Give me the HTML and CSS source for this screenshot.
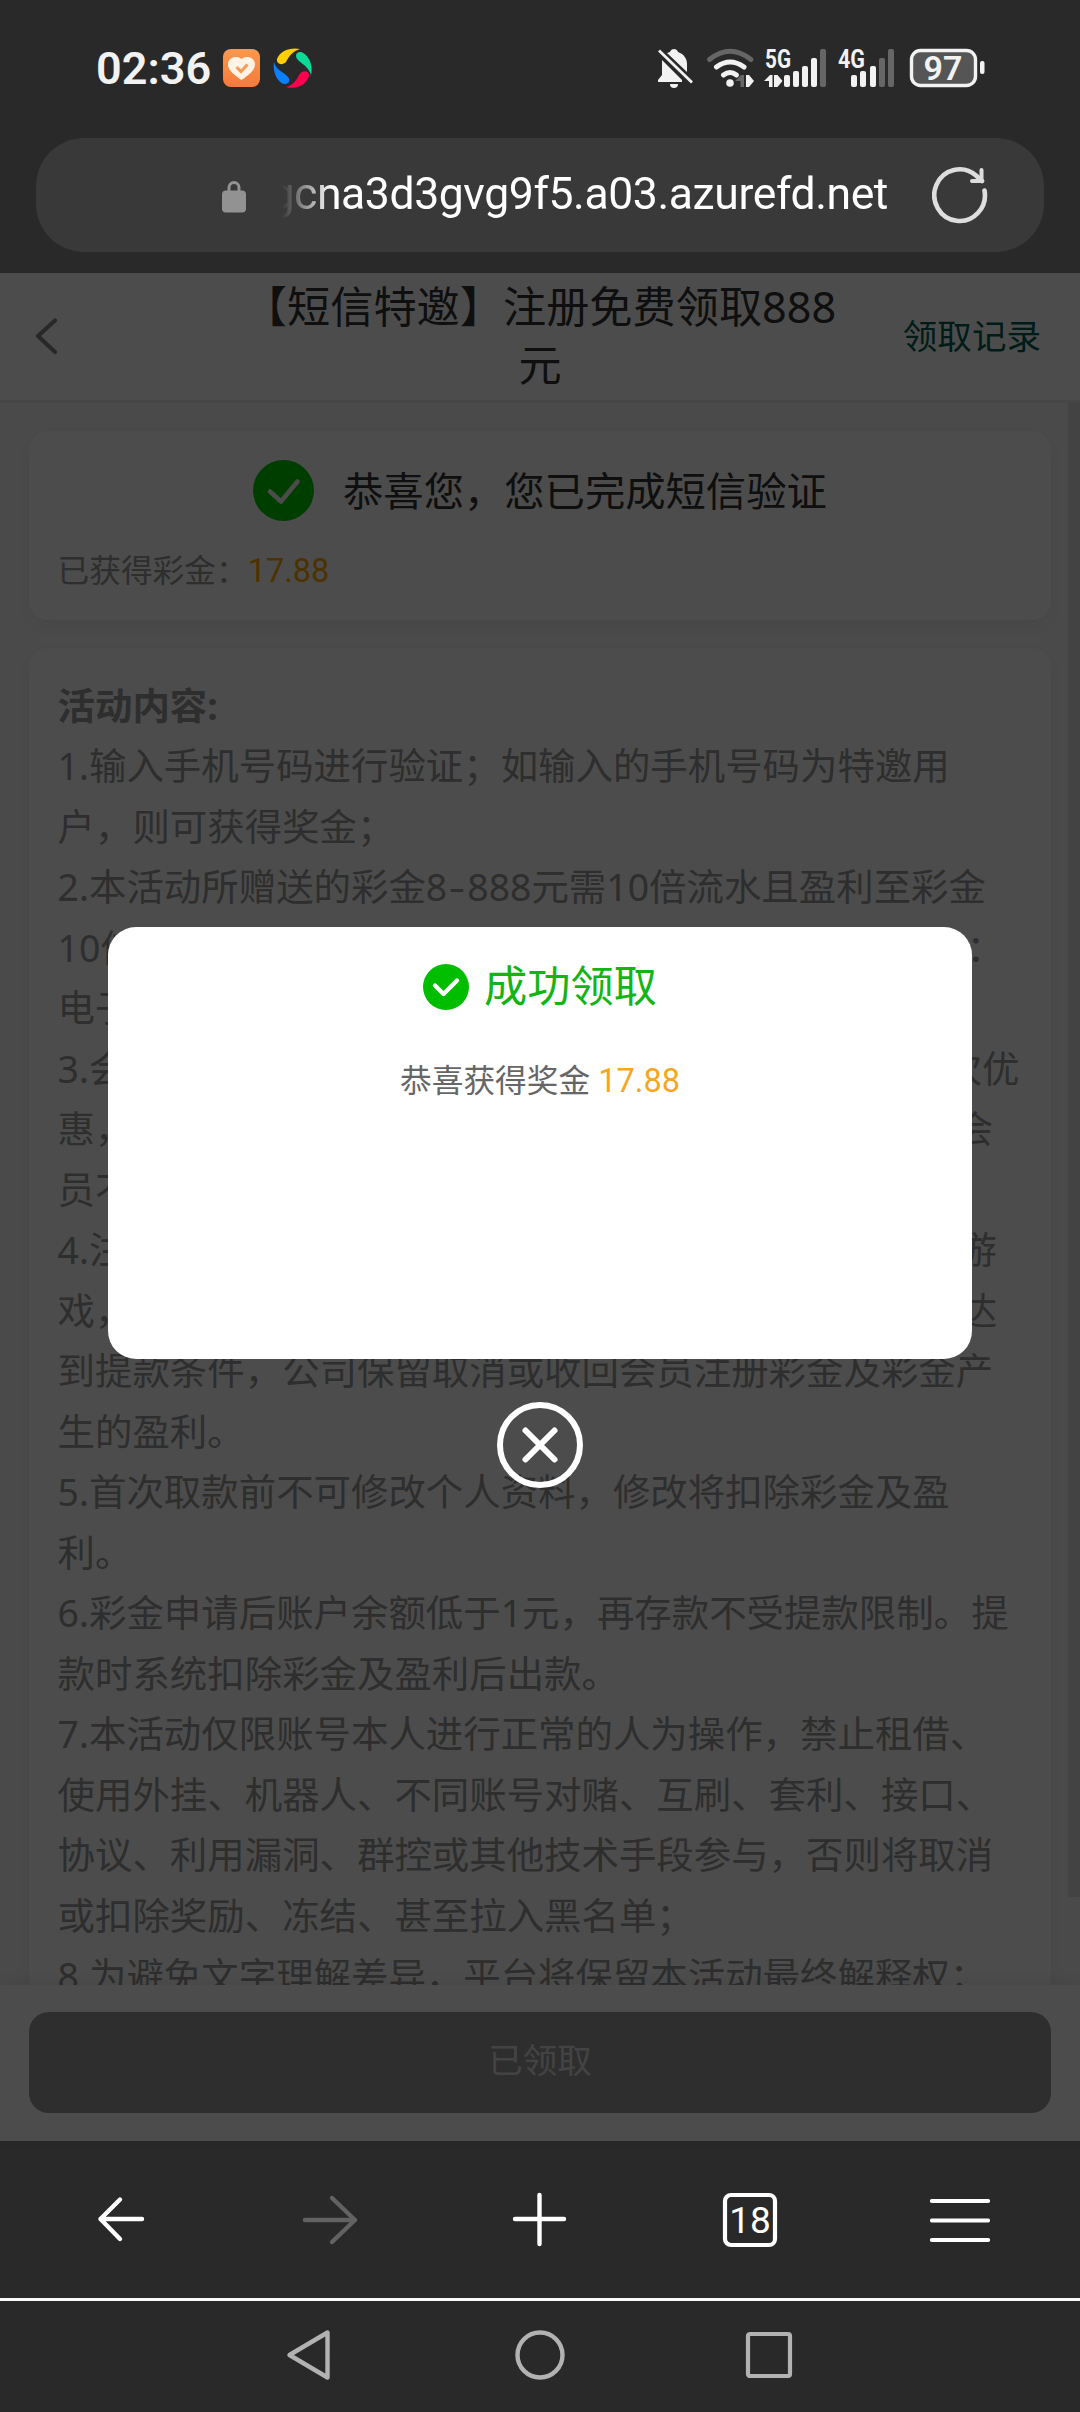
FILE: index.html
```html
<!DOCTYPE html>
<html lang="zh-CN">
<head>
<meta charset="utf-8">
<title>注册免费领取888元</title>
<link rel="stylesheet" href="styles.css">
</head>
<body>
<div class="phone">
  <header class="status">
    <div class="status-left">
      <span class="clock">02:36</span>
      <svg class="app-heart" width="37" height="38" viewBox="0 0 37 38"><defs><linearGradient id="og" x1="0" y1="0" x2="0" y2="1"><stop offset="0" stop-color="#f8994f"/><stop offset="1" stop-color="#f67a3d"/></linearGradient></defs><rect width="37" height="38" rx="8" fill="url(#og)"/><path d="M18.500 31C13 27 5 22 5 15.500C5 8 14 6 18.500 10C23 6 32 8 32 15.500C32 22 24 27 18.500 31Z" fill="#fff3e6"/><path d="M13.500 18l4.500 4.500 6.500-7" fill="none" stroke="#f79a55" stroke-width="3"/></svg>
      <svg class="app-ring" width="40" height="40" viewBox="0 0 40 40"><path d="M4 11C7 3 17-1 27 1C20 3 16 8 13 14C9 18 3 16 4 11Z" fill="#ffd000"/><path d="M27 4C33 4 41 15 38 27C36 20 31 17 26 13C21 9 23 4 27 4Z" fill="#0dd99b"/><path d="M36 28C33 37 23 42 13 39C20 37 23 33 26 27C30 21 37 23 36 28Z" fill="#ff0050"/><path d="M13 36C6 37-1 25 1 14C3 21 8 23 13 27C18 31 17 35 13 36Z" fill="#0a80ff"/></svg>
    </div>
    <svg class="status-right" width="330" height="42" viewBox="656 48 330 42">
      <g fill="#f2f2f2">
        <path d="M670 52C671 48 677 48 678 52C684 54 687 59 687 64V72L667 53Z"/>
        <path d="M662 60l20 20v2h-24v-2l4-5Z"/>
        <path d="M670 84h8a4 4 0 0 1-8 0Z"/>
      </g>
      <path d="M659 50.500l33 32" stroke="#f2f2f2" stroke-width="2.800"/>
      <g fill="none" stroke-width="5" stroke-linecap="round">
        <path d="M709.500 59.500Q730 43 751 59.500" stroke="#666"/>
        <path d="M716.500 67Q730 57 744 67" stroke="#f2f2f2"/>
        <path d="M723.500 75Q730 70 736.500 75" stroke="#f2f2f2"/>
      </g>
      <circle cx="730" cy="83" r="3.800" fill="#f2f2f2"/>
      <path d="M735 81l6-6h3v12h-3.500v-6Z" fill="#666"/>
      <path d="M746 75h3l5 6-5 6h-3Z" fill="#f2f2f2"/>
      <text x="765" y="68" class="net" textLength="26" lengthAdjust="spacingAndGlyphs">5G</text>
      <path d="M764 81l6-6h2.500v12h-3.500v-6Z" fill="#f2f2f2"/>
      <path d="M774 75h3.500l5 6-5 6h-3.500Z" fill="#f2f2f2"/>
      <g fill="#f2f2f2">
        <rect x="784" y="75" width="6" height="12" rx="2"/><rect x="793" y="71" width="6" height="16" rx="2"/><rect x="802" y="66" width="6" height="21" rx="2"/><rect x="811" y="58" width="6" height="29" rx="2"/>
        <rect x="851" y="75" width="6" height="12" rx="2"/><rect x="860" y="71" width="6" height="16" rx="2"/><rect x="870" y="66" width="6" height="21" rx="2"/>
      </g>
      <g fill="#666"><rect x="820" y="49" width="6" height="38" rx="2"/><rect x="879" y="58" width="6" height="29" rx="2"/><rect x="888" y="49" width="6" height="38" rx="2"/></g>
      <text x="838" y="68" class="net" textLength="27" lengthAdjust="spacingAndGlyphs">4G</text>
      <rect x="911.500" y="50.500" width="64" height="35" rx="9" fill="#555" stroke="#f2f2f2" stroke-width="3.400"/>
      <rect x="980" y="61" width="4.500" height="13" rx="2" fill="#f2f2f2"/>
      <text x="943" y="80" class="batt" text-anchor="middle">97</text>
    </svg>
  </header>

  <div class="address">
    <svg class="lock" width="24" height="32" viewBox="0 0 24 32"><path d="M7 11V6.500a5 5 0 0 1 10 0V11" fill="none" stroke="#929292" stroke-width="3"/><rect y="9.500" width="24" height="22" rx="4" fill="#929292"/></svg>
    <div class="url"><span class="url-text">gcna3d3gvg9f5.a03.azurefd.net</span></div>
    <svg class="reload" width="56" height="58" viewBox="0 0 56 58"><path d="M52.500 24.500A25.300 25.800 0 1 1 44 9.500L50 15" fill="none" stroke="#dedede" stroke-width="4.600" stroke-linecap="round"/><path d="M49.500 4v11H40" fill="none" stroke="#dedede" stroke-width="4" stroke-linecap="round"/></svg>
  </div>

  <main class="page">
    <div class="title-bar">
      <svg class="back" width="24" height="38" viewBox="0 0 24 38"><path d="M20 2.500L3 18L20 34" fill="none" stroke="#888" stroke-width="4.200" stroke-linecap="round" stroke-linejoin="round"/></svg>
      <h1 class="title">【短信特邀】注册免费领取888<br>元</h1>
      <span class="records">领取记录</span>
    </div>
    <div class="content">
      <section class="card verified">
        <div class="verified-row">
          <svg width="61" height="61" viewBox="0 0 61 61"><circle cx="30.500" cy="30.500" r="30.500" fill="#00cf00"/><path d="M17 31.500L28 41.500L44.500 21.500" fill="none" stroke="#fff" stroke-width="4.600" stroke-linecap="round" stroke-linejoin="round"/></svg>
          <span class="verified-text">恭喜您，您已完成短信验证</span>
        </div>
        <div class="bonus">已获得彩金：<span class="amount">17.88</span></div>
      </section>
      <section class="card rules">
        <h2 class="rules-title">活动内容:</h2>
        <p class="rule">1.输入手机号码进行验证；如输入的手机号码为特邀用<br>户，则可获得奖金；</p>
        <p class="rule">2.本活动所赠送的彩金8<span class="dash">-</span>888元需10倍流水且盈利至彩金<br>10倍即可申请提款，上限为88元，仅限以下游戏中参与：<br>电子。</p>
        <p class="rule">3.会员同姓名、同手机、同设备、同<span class="tight">IP</span>地址只能申请一次优<br>惠，如发现有违规套利行为，平台有权取消资格，违规会<br>员不得异议。</p>
        <p class="rule">4.注册彩金仅限体验<span class="loose">88</span>元以下的电子、棋牌、捕鱼类的游<br>戏，<span class="loose">其他</span>游戏产生的盈利一律无效；会员申请提款时未达<br>到提款条件，公司保留取消或收回会员注册彩金及彩金产<br>生的盈利。</p>
        <p class="rule">5.首次取款前不可修改个人资料，修改将扣除彩金及盈<br>利。</p>
        <p class="rule">6.彩金申请后账户余额低于1元，再存款不受提款限制。提<br>款时系统扣除彩金及盈利后出款。</p>
        <p class="rule">7.本活动仅限账号本人进行正常的人为操作，禁止租借、<br>使用外挂、机器人、不同账号对赌、互刷、套利、接口、<br>协议、利用漏洞、群控或其他技术手段参与，否则将取消<br>或扣除奖励、冻结、甚至拉入黑名单；</p>
        <p class="rule">8.为避免文字理解差异，平台将保留本活动最终解释权；</p>
      </section>
      <div class="scroll-thumb"></div>
    </div>
    <div class="claim-bar"><div class="claim">已领取</div></div>

    <div class="mask">
      <div class="modal">
        <div class="modal-title">
          <svg width="46" height="46" viewBox="0 0 46 46"><circle cx="23" cy="23" r="23" fill="#00bd00"/><path d="M12 21.500L20.500 30L34 16.500" fill="none" stroke="#fff" stroke-width="4.400" stroke-linecap="round" stroke-linejoin="round"/></svg>
          <span class="modal-title-text">成功领取</span>
        </div>
        <div class="modal-text">恭喜获得奖金 <span class="amount">17.88</span></div>
      </div>
      <svg class="close" width="86" height="86" viewBox="0 0 86 86"><g fill="none" stroke="#fff" stroke-width="6" stroke-linecap="round"><circle cx="43" cy="43" r="40"/><path d="M28.500 28.500l29 29M57.500 28.500l-29 29"/></g></svg>
    </div>
  </main>

  <nav class="toolbar">
    <svg width="60" height="60" viewBox="0 0 60 60"><path d="M52 29H10.500M30 9.500L10.500 29L30 49" fill="none" stroke="#fff" stroke-width="4.400" stroke-linecap="round" stroke-linejoin="round"/></svg>
    <svg width="60" height="60" viewBox="0 0 60 60"><path d="M5 30H55M32 8L55 30L32 52" fill="none" stroke="#626262" stroke-width="4.400" stroke-linecap="round" stroke-linejoin="round"/></svg>
    <svg width="60" height="60" viewBox="0 0 60 60"><path d="M5 29H54M29.500 5V54" fill="none" stroke="#fff" stroke-width="4.400" stroke-linecap="round"/></svg>
    <svg width="60" height="60" viewBox="0 0 60 60"><rect x="5" y="5" width="50" height="50" rx="6" fill="none" stroke="#fff" stroke-width="4.200"/><text x="30" y="42.500" class="tabs" text-anchor="middle">18</text></svg>
    <svg width="60" height="60" viewBox="0 0 60 60"><path d="M2 11H58M2 30.500H58M2 50H58" fill="none" stroke="#fff" stroke-width="4.200" stroke-linecap="round"/></svg>
  </nav>
  <footer class="sysnav">
    <svg width="50" height="54" viewBox="0 0 50 54"><path d="M4.500 27L42.500 4.500V49.500Z" fill="none" stroke="#b2b2b2" stroke-width="4.400" stroke-linejoin="round"/></svg>
    <svg width="50" height="54" viewBox="0 0 50 54"><circle cx="25" cy="27" r="22.500" fill="none" stroke="#b2b2b2" stroke-width="4.400"/></svg>
    <svg width="50" height="54" viewBox="0 0 50 54"><rect x="3" y="6" width="42" height="42" rx="2" fill="none" stroke="#b2b2b2" stroke-width="4.200"/></svg>
  </footer>
</div>
</body>
</html>
```
FILE: styles.css
```css
* { box-sizing: border-box; margin: 0; padding: 0; }
svg { display: block; flex: none; }
body {
  width: 1080px;
  background: #292929;
  font-family: "Noto Sans", "Noto Sans CJK SC", sans-serif;
  text-spacing-trim: space-all;
}
.phone { width: 1080px; height: 2412px; overflow: hidden; display: flex; flex-direction: column; }

.status { height: 138px; flex: none; display: flex; justify-content: space-between; align-items: flex-start; padding: 48px 94px 0 96px; }
.status-left { display: flex; align-items: flex-start; }
.clock { width: 127px; font: 600 45px/41px Roboto, sans-serif; color: #f2f2f2; white-space: nowrap; }
.app-heart { margin-top: 1px; }
.app-ring { margin-left: 13px; }
.status-right { overflow: visible; }
.net { font: 700 25px Roboto, sans-serif; fill: #f2f2f2; }
.batt { font: 600 34px Roboto, sans-serif; fill: #f2f2f2; }

.address { height: 114px; flex: none; margin: 0 36px 21px; border-radius: 48px; background: #393939; display: flex; align-items: center; padding: 0 56px 0 186px; }
.lock { margin-top: 3px; }
.url { flex: 1; height: 114px; margin: 0 44px 0 36px; overflow: hidden; display: flex; justify-content: flex-end; -webkit-mask-image: linear-gradient(90deg, transparent, #000 50px); mask-image: linear-gradient(90deg, transparent, #000 50px); }
.url-text { flex: none; color: #fff; font-family: Roboto, sans-serif; font-size: 44.500px; letter-spacing: -.4px; line-height: 113px; white-space: nowrap; }

.page { position: relative; height: 1868px; flex: none; background: #fff; display: flex; flex-direction: column; }
.title-bar { height: 130px; flex: none; border-bottom: 3px solid #ebebeb; display: grid; grid-template-columns: 240px 1fr 240px; align-items: center; }
.back { margin-left: 35px; }
.title { font-size: 43.200px; line-height: 57.600px; font-weight: 400; color: #333; text-align: center; white-space: nowrap; padding-bottom: 2px; }
.records { font-size: 34.560px; color: #006055; justify-self: end; margin-right: 39px; padding-bottom: 5px; white-space: nowrap; }
.content { position: relative; flex: 1; min-height: 0; overflow: hidden; background: #f8f8f8; padding: 28px 29px 0; display: flex; flex-direction: column; gap: 28px; }
.card { flex: none; background: #fff; border-radius: 20px; box-shadow: 0 6px 18px rgba(0, 0, 0, .06); padding: 0 28.600px; }
.verified { height: 189px; }
.verified-row { display: flex; justify-content: center; align-items: center; gap: 28.800px; height: 61px; margin-top: 29px; font-size: 40.320px; color: #333; white-space: nowrap; }
.verified-text { padding-bottom: 4px; }
.bonus { margin-top: 27px; font-size: 31.680px; line-height: 44px; color: #999; }
.amount { font-family: Roboto, sans-serif; font-size: 32.500px; color: #f5a623; }
.bonus .amount { color: #ffa800; }
.rules { padding-top: 28px; height: 1600px; color: #999; font-size: 37.440px; line-height: 60.480px; white-space: nowrap; }
.rules-title { font-size: inherit; font-weight: 700; }
.dash { display: inline-block; width: 20px; text-align: center; transform: scaleX(1.400); }
.tight { letter-spacing: -1.500px; }
.loose { letter-spacing: 2px; }
.scroll-thumb { position: absolute; top: 0; right: 0; width: 12px; height: 1494px; background: #e2e2e2; }
.claim-bar { height: 156px; flex: none; background: #fff; box-shadow: 0 -4px 14px rgba(0, 0, 0, .07); padding: 27px 29px 0; position: relative; }
.claim { height: 101px; border-radius: 20px; background: #999; color: #e2e2e2; font-size: 34.560px; line-height: 95px; text-align: center; }

.mask { position: absolute; inset: 0; background: rgba(0, 0, 0, .7); display: flex; flex-direction: column; align-items: center; padding-top: 654px; }
.modal { width: 864px; height: 432px; flex: none; border-radius: 28px; background: #fff; }
.modal-title { display: flex; justify-content: center; align-items: center; gap: 15px; height: 60px; margin-top: 30px; font-size: 43.200px; color: #13b413; }
.modal-title-text { padding-bottom: 8px; }
.modal-text { margin-top: 41px; font-size: 31.680px; line-height: 44px; text-align: center; color: #666; }
.close { margin-top: 43px; }

.toolbar { height: 157px; flex: none; display: flex; justify-content: space-between; padding: 49px 90px 0; }
.tabs { font: 400 37px Roboto, sans-serif; fill: #fff; }
.sysnav { flex: 1; border-top: 3px solid #fafafa; display: flex; justify-content: center; gap: 180px; padding-top: 27px; }
```
